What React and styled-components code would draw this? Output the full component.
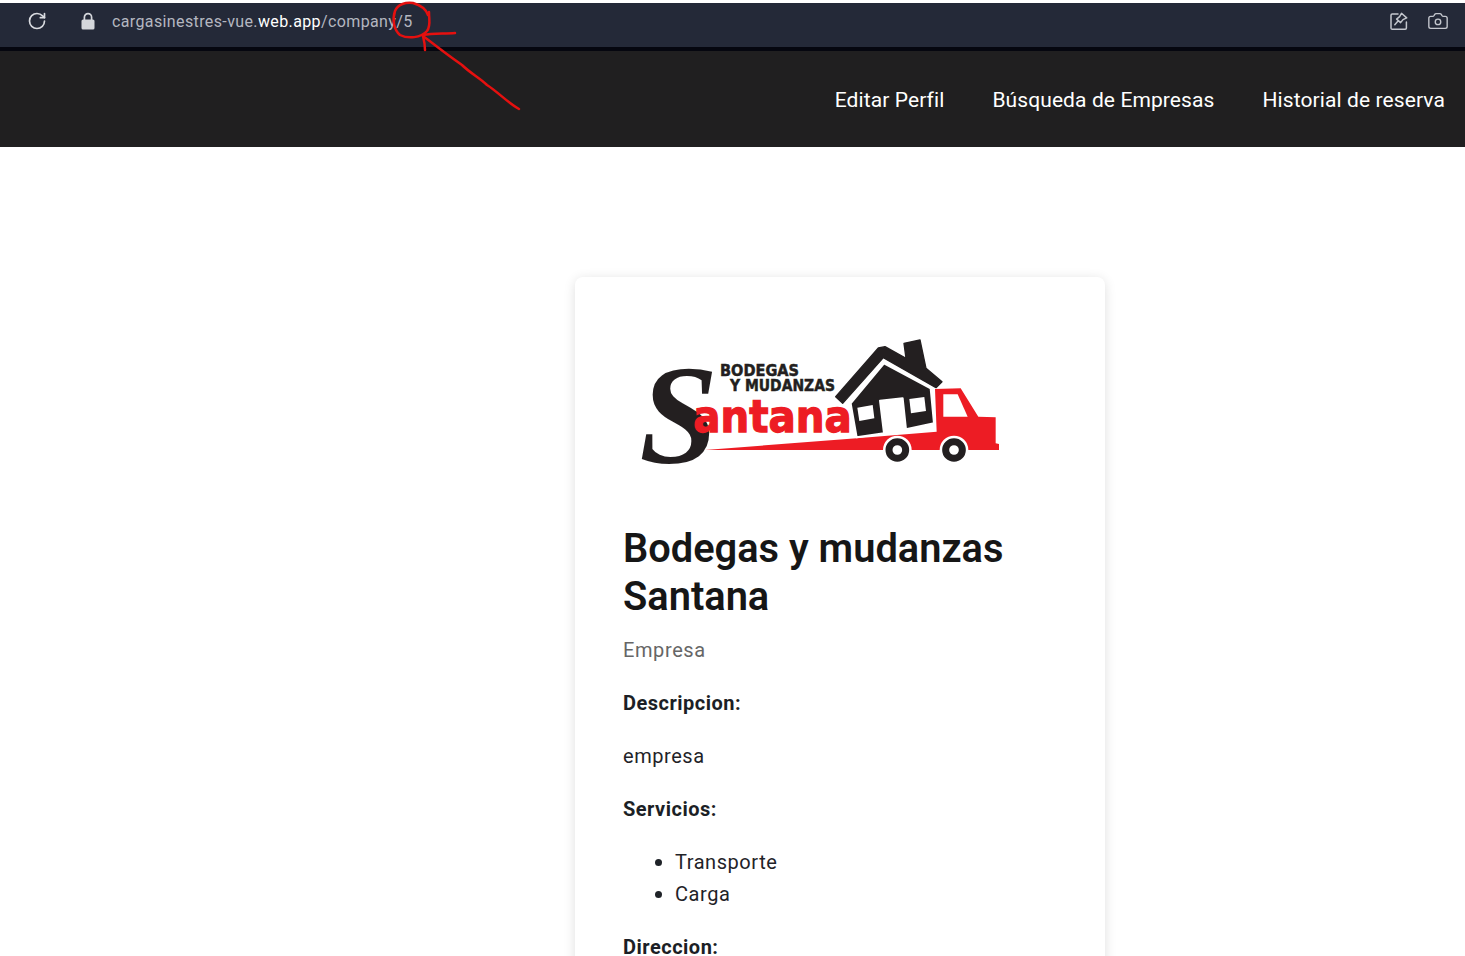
import React from "react";
import styled, { createGlobalStyle } from "styled-components";
import { RotateCw, Camera } from "lucide-react";

const Global = createGlobalStyle`
  html, body { margin: 0; padding: 0; background: #fff; height: 956px; overflow: hidden; }
  body { font-family: Roboto, "Liberation Sans", sans-serif; }
  * { box-sizing: border-box; }
`;

const Page = styled.div`
  position: relative;
  width: 1465px;
  height: 956px;
  overflow: hidden;
  background: #fff;
  padding-top: 3px;
`;

const BrowserBar = styled.div`
  height: 48px;
  background: #242938;
  border-bottom: 4px solid #05060f;
  display: flex;
  align-items: center;
  padding: 0 16px 8px 27px;
  color: #c9ccd3;
`;

const LockSlot = styled.span`
  display: flex;
  margin-left: 33px;
  margin-right: 16px;
`;

const Url = styled.div`
  font-size: 16px;
  color: #b4b7c0;
  letter-spacing: 0.38px;
  white-space: nowrap;
  flex: 1;
`;

const Domain = styled.span`
  color: #fff;
`;

const BarActions = styled.div`
  display: flex;
  align-items: center;
  gap: 18px;
`;

const Nav = styled.nav`
  height: 96px;
  background: #201f20;
  display: flex;
  align-items: center;
  justify-content: flex-end;
  gap: 48px;
  padding: 2px 20px 0 0;
`;

const NavLink = styled.a`
  color: #fff;
  font-size: 21px;
  line-height: 24px;
  letter-spacing: 0.1px;
  text-decoration: none;
`;

const Main = styled.main`
  padding: 130px 0 0 575px;
`;

const Card = styled.article`
  width: 530px;
  background: #fff;
  border-radius: 8px;
  box-shadow: 0 2px 12px rgba(0, 0, 0, 0.13);
  padding: 48px;
  color: #1f2328;
`;

const LogoSvg = styled.svg`
  display: block;
  width: 380px;
  height: 145px;
  margin: 5px 0 50px 7px;
`;

const Title = styled.h1`
  margin: 0 0 13px;
  font-size: 39.8px;
  line-height: 48px;
  font-weight: 600;
  color: #161616;
`;

const Subtitle = styled.p`
  margin: 0 0 21px;
  font-size: 20px;
  line-height: 32px;
  letter-spacing: 0.6px;
  color: #666;
`;

const Label = styled.p`
  margin: 0 0 21px;
  font-size: 20px;
  line-height: 32px;
  font-weight: 700;
  letter-spacing: 0.5px;
  color: #1c1f26;
`;

const Text = styled.p`
  margin: 0 0 21px;
  font-size: 20px;
  line-height: 32px;
  letter-spacing: 0.55px;
`;

const List = styled.ul`
  margin: 0 0 21px;
  padding: 0 0 0 32px;
  list-style: none;
  font-size: 20px;
  line-height: 32px;
  letter-spacing: 0.55px;
`;

const Item = styled.li`
  display: flex;
  align-items: center;
  gap: 13px;

  &::before {
    content: "";
    width: 7px;
    height: 7px;
    border-radius: 50%;
    background: #1f2328;
  }
`;

const Annotation = styled.svg`
  position: absolute;
  top: 0;
  left: 0;
  pointer-events: none;
`;

const Logo = () => (
  <LogoSvg viewBox="0 0 1140 435" aria-label="Bodegas y mudanzas Santana">
    <path
      fill="#ed1c24"
      d="M915 177L992 175L1045 260L1097 262L1097 340L1107 342L1107 360L225 360L690 324L920 305Z"
    />
    <path fill="#fff" d="M940 193L983 193L1013 260L940 260Z" />
    <text x="28" y="398" fontFamily="'Liberation Serif', serif" fontStyle="italic" fontWeight="700" fontSize="425" fill="#231f20">S</text>
    <text x="190" y="305" fontFamily="'DejaVu Sans', sans-serif" fontWeight="700" fontSize="135" fill="#ed1c24" stroke="#ed1c24" strokeWidth="4" textLength="475" lengthAdjust="spacingAndGlyphs">antana</text>
    <text x="270" y="138" fontFamily="'DejaVu Sans', sans-serif" fontWeight="700" fontSize="47" fill="#231f20" stroke="#231f20" strokeWidth="1.5" textLength="237" lengthAdjust="spacingAndGlyphs">BODEGAS</text>
    <text x="300" y="184" fontFamily="'DejaVu Sans', sans-serif" fontWeight="700" fontSize="47" fill="#231f20" stroke="#231f20" strokeWidth="1.5" textLength="315" lengthAdjust="spacingAndGlyphs">Y MUDANZAS</text>
    <path
      fill="#231f20"
      stroke="#fff"
      strokeWidth="6"
      strokeLinejoin="round"
      d="M662 220L762 100L902 175L912 280L828 298L818 205L750 212L762 310L680 322Z"
    />
    <path fill="#fff" d="M682 233L728 225L733 265L688 273Z" />
    <path fill="#fff" d="M838 207L883 201L888 243L843 250Z" />
    <path
      fill="#231f20"
      strokeLinejoin="round"
      stroke="#231f20"
      strokeWidth="4"
      d="M617 200L745 54L765 50L828 85L822 40L870 30L888 115L936 155L918 173L760 83L638 220Z"
    />
    <circle cx="802" cy="360" r="43" fill="#fff" />
    <circle cx="802" cy="360" r="25" fill="#fff" stroke="#231f20" strokeWidth="21" />
    <circle cx="972" cy="360" r="43" fill="#fff" />
    <circle cx="972" cy="360" r="25" fill="#fff" stroke="#231f20" strokeWidth="21" />
  </LogoSvg>
);

const LockIcon = () => (
  <svg width="16" height="18" viewBox="0 0 16 18">
    <path fill="none" stroke="#d5d7dc" strokeWidth="1.7" d="M4.4 8V5.200a3.600 3.600 0 0 1 7.200 0V8" />
    <rect x="1.500" y="7.500" width="13" height="10" rx="1.600" fill="#d5d7dc" />
  </svg>
);

const PinEditIcon = () => (
  <svg width="20" height="20" viewBox="0 0 20 20" fill="none" stroke="#c3c6cd" strokeWidth="1.5" strokeLinejoin="round" strokeLinecap="round">
    <path d="M9 3H3.200A1.200 1.200 0 0 0 2 4.200v13A1.200 1.200 0 0 0 3.200 18.300h13a1.200 1.200 0 0 0 1.200-1.200V11" />
    <path d="M12.500 2.300l5.200 4.600-3.700 1.700-2.400 3-4-3.500 3-2.500zM8.600 10.500L5.800 13.700" />
  </svg>
);

const Marks = () => (
  <Annotation width="1465" height="956" viewBox="0 0 1465 956" fill="none" stroke="#e5100f" strokeWidth="2.500" strokeLinecap="round" strokeLinejoin="round">
    <path d="M429 12C429 20 431 26 427 31C421 38 408 39 400 35C394 30 392 20 395 11C398 4 406 2 413 3C420 5 426 9 428 15" />
    <path d="M519 109C508 103 498 92 487 85C480 78 470 73 462 65C450 57 436 46 423 36" />
    <path d="M423 35C433 33 445 34 455 33" />
    <path d="M423 36C424 40 425 45 425 50" />
  </Annotation>
);

export default function App() {
  return (
    <Page>
      <Global />
      <BrowserBar>
        <RotateCw size={20} strokeWidth={2} color="#d9dbe0" />
        <LockSlot><LockIcon /></LockSlot>
        <Url>
          cargasinestres-vue.<Domain>web.app</Domain>/company/5
        </Url>
        <BarActions>
          <PinEditIcon />
          <Camera size={22} strokeWidth={1.500} color="#c3c6cd" />
        </BarActions>
      </BrowserBar>
      <Nav>
        <NavLink href="#">Editar Perfil</NavLink>
        <NavLink href="#">Búsqueda de Empresas</NavLink>
        <NavLink href="#">Historial de reserva</NavLink>
      </Nav>
      <Main>
        <Card>
          <Logo />
          <Title>Bodegas y mudanzas Santana</Title>
          <Subtitle>Empresa</Subtitle>
          <Label>Descripcion:</Label>
          <Text>empresa</Text>
          <Label>Servicios:</Label>
          <List>
            <Item>Transporte</Item>
            <Item>Carga</Item>
          </List>
          <Label>Direccion:</Label>
        </Card>
      </Main>
      <Marks />
    </Page>
  );
}
